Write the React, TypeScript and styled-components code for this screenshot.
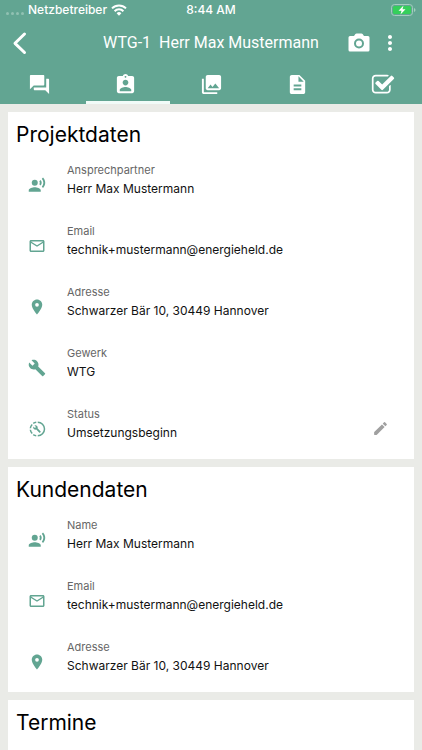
import React from "react";
import styled, { createGlobalStyle } from "styled-components";
import {
  MdForum,
  MdAssignmentInd,
  MdPhotoLibrary,
  MdDescription,
  MdRecordVoiceOver,
  MdMailOutline,
  MdPlace,
  MdBuild,
  MdMoreVert,
} from "react-icons/md";

const green = "#62a592";

const GlobalStyle = createGlobalStyle`
  * { box-sizing: border-box; }
  body {
    margin: 0;
    background: #eaebe7;
    font-family: Inter, "Liberation Sans", sans-serif;
    color: #111;
  }
  #root { display: flex; flex-direction: column; min-height: 100vh; }
  button { border: 0; padding: 0; background: none; color: inherit; font: inherit; cursor: pointer; }
  svg { display: block; }
`;

const Header = styled.header`
  background: ${green};
  color: #fff;
  overflow: hidden;
`;

const StatusBar = styled.div`
  display: grid;
  grid-template-columns: 1fr auto 1fr;
  align-items: center;
  height: 20px;
  padding: 0 6px;
  font-size: 12px;
  line-height: 20px;
  font-weight: 500;
`;

const Carrier = styled.div`
  display: flex;
  align-items: center;
  gap: 4px;
`;

const Dots = styled.span`
  display: flex;
  gap: 2px;
  padding-top: 6px;
`;

const Dot = styled.i`
  width: 3px;
  height: 3px;
  border-radius: 50%;
  background: #91c1b2;
`;

const BatterySlot = styled.div`
  display: flex;
  justify-content: flex-end;
`;

const TitleBar = styled.div`
  display: grid;
  grid-template-columns: 80px 1fr 80px;
  align-items: center;
  height: 46px;
`;

const BackButton = styled.button`
  justify-self: start;
  padding-left: 12px;
`;

const Title = styled.h1`
  margin: 0;
  font: 400 16px/24px Roboto, sans-serif;
  text-align: center;
  white-space: pre;
`;

const Actions = styled.div`
  display: flex;
  align-items: center;
  gap: 8px;
  padding-left: 6px;
`;

const Tabs = styled.nav`
  display: grid;
  grid-template-columns: repeat(5, 1fr);
  margin: 0 -4px;
`;

const Tab = styled.button<{ $active?: boolean }>`
  position: relative;
  display: flex;
  justify-content: center;
  height: 38px;
  padding-top: 7px;

  &::after {
    content: "";
    position: absolute;
    inset: auto -2px 0 4px;
    height: 3px;
    background: ${(p) => (p.$active ? "#f1fbf8" : "transparent")};
  }
`;

const Content = styled.main`
  display: flex;
  flex: 1;
  flex-direction: column;
  gap: 8px;
  padding: 8px 8px 0;
`;

const Card = styled.section`
  background: #fff;
  padding: 9px 8px 4px;

  &:last-child { flex: 1; }
`;

const Heading = styled.h2`
  margin: 0 0 1px;
  font-size: 21px;
  line-height: 28px;
  font-weight: 400;
  color: #000;
`;

const Row = styled.div`
  display: grid;
  grid-template-columns: 51px 1fr 34px;
  align-items: center;
  height: 61px;
`;

const RowIcon = styled.span`
  padding: 8px 0 0 12px;
  color: ${green};
`;

const Label = styled.div`
  font-size: 11px;
  line-height: 16px;
  color: #666;
`;

const Value = styled.div`
  font-size: 12px;
  line-height: 22px;
`;

const EditButton = styled.button`
  justify-self: start;
  padding-top: 8px;
  color: #a0a0a0;
`;

const WifiIcon = () => (
  <svg width="16" height="12" viewBox="0 0 16 12" fill="none" stroke="#fff" strokeWidth="2" aria-hidden="true">
    <path d="M1 4.4a10 10 0 0 1 14 0M3.6 7.2a6.2 6.2 0 0 1 8.8 0" />
    <path d="M8 11.8 5.6 9.3a3.4 3.4 0 0 1 4.8 0Z" fill="#fff" stroke="none" />
  </svg>
);

const BatteryIcon = () => (
  <svg width="25" height="12" viewBox="0 0 25 12" aria-label="Akku wird geladen">
    <rect x=".5" y=".5" width="21" height="11" rx="3" fill="none" stroke="#a5cdbf" />
    <rect x="2" y="2" width="18" height="8" rx="1.5" fill="#35cf5b" />
    <path d="M23 4q1.5 .5 1.5 2T23 8Z" fill="#a5cdbf" />
    <path d="M12.5 1.5 7.5 6.7h3l-1 3.8 5-5.2h-3Z" fill="#fff" />
  </svg>
);

const BackIcon = () => (
  <svg width="16" height="24" viewBox="0 0 16 24" fill="none" stroke="#fff" strokeWidth="3" strokeLinecap="round" strokeLinejoin="round" aria-hidden="true">
    <path d="M12.5 3 3 12.3l9.5 9.2" />
  </svg>
);

const CameraIcon = () => (
  <svg width="22" height="20" viewBox="0 0 22 20" aria-hidden="true">
    <path d="M2 3h4l1.4-2q.4-.6 1.2-.6h4.800q.8 0 1.200.6L16 3h4q1.500 0 1.500 1.500v12.500q0 1.500-1.500 1.500H2q-1.500 0-1.500-1.500V4.500Q.5 3 2 3Z" fill="#fff" />
    <circle cx="11" cy="10.5" r="4" fill="none" stroke={green} strokeWidth="2" />
  </svg>
);

const CheckIcon = () => (
  <svg width="24" height="24" viewBox="0 0 1792 1792" fill="#fff" aria-hidden="true">
    <path d="M1472 930v318q0 119-84.500 203.500t-203.500 84.500h-832q-119 0-203.500-84.500t-84.500-203.500v-832q0-119 84.500-203.500t203.500-84.500h832q63 0 117 25 15 7 18 23 3 17-9 29l-49 49q-10 10-23 10-3 0-9-2-23-6-45-6h-832q-66 0-113 47t-47 113v832q0 66 47 113t113 47h832q66 0 113-47t47-113v-254q0-13 9-22l64-64q10-10 23-10 6 0 12 3 20 8 20 29zm231-489l-814 814q-24 24-57 24t-57-24l-430-430q-24-24-24-57t24-57l110-110q24-24 57-24t57 24l263 263 647-647q24-24 57-24t57 24l110 110q24 24 24 57t-24 57z" />
  </svg>
);

const PencilIcon = () => (
  <svg width="17" height="17" viewBox="0 0 24 24" fill="currentColor" aria-hidden="true">
    <path d="M3 17.460v3.040c0 .28.22.5.5.5h3.040c.13 0 .26-.05.35-.15L17.810 9.940l-3.750-3.750L3.150 17.100q-.15.15-.15.36zM20.710 7.040a1 1 0 0 0 0-1.410l-2.340-2.340a1 1 0 0 0-1.410 0l-1.830 1.830 3.750 3.750 1.830-1.830z" />
  </svg>
);

const ProgressIcon = () => (
  <svg width="18" height="18" viewBox="0 0 24 24" fill="none" stroke="currentColor" strokeWidth="2" aria-hidden="true">
    <path d="M13 3a9 9 0 0 1 0 18M11 3a9 9 0 0 0-4 1.600M5.600 6A9 9 0 0 0 3.100 11M3.100 13a9 9 0 0 0 2.500 5M7 19.400A9 9 0 0 0 11 21" />
    <g transform="translate(6.500 6.500) scale(.46)" fill="currentColor" stroke="none">
      <path d="M22.700 19l-9.100-9.100c.9-2.300.4-5-1.500-6.900-2-2-5-2.400-7.400-1.300L9 6 6 9 1.600 4.700C.4 7.100.9 10.100 2.900 12.100c1.900 1.900 4.600 2.400 6.900 1.500l9.100 9.100c.4.4 1 .4 1.400 0l2.300-2.300c.5-.4.5-1.100.1-1.400z" />
    </g>
  </svg>
);

type Entry = { icon: React.ReactNode; label: string; value: string; editable?: boolean };

const person = <MdRecordVoiceOver size={18} />;
const mail = <MdMailOutline size={18} />;
const place = <MdPlace size={18} />;

const project: Entry[] = [
  { icon: person, label: "Ansprechpartner", value: "Herr Max Mustermann" },
  { icon: mail, label: "Email", value: "technik+mustermann@energieheld.de" },
  { icon: place, label: "Adresse", value: "Schwarzer Bär 10, 30449 Hannover" },
  { icon: <MdBuild size={18} />, label: "Gewerk", value: "WTG" },
  { icon: <ProgressIcon />, label: "Status", value: "Umsetzungsbeginn", editable: true },
];

const customer: Entry[] = [
  { icon: person, label: "Name", value: "Herr Max Mustermann" },
  { icon: mail, label: "Email", value: "technik+mustermann@energieheld.de" },
  { icon: place, label: "Adresse", value: "Schwarzer Bär 10, 30449 Hannover" },
];

const tabs = [
  { name: "Nachrichten", icon: <MdForum size={23} /> },
  { name: "Projekt", icon: <MdAssignmentInd size={23} /> },
  { name: "Bilder", icon: <MdPhotoLibrary size={23} /> },
  { name: "Dokumente", icon: <MdDescription size={23} /> },
  { name: "Aufgaben", icon: <CheckIcon /> },
];

const DataCard = ({ title, entries }: { title: string; entries: Entry[] }) => (
  <Card>
    <Heading>{title}</Heading>
    {entries.map((e) => (
      <Row key={e.label}>
        <RowIcon>{e.icon}</RowIcon>
        <div>
          <Label>{e.label}</Label>
          <Value>{e.value}</Value>
        </div>
        {e.editable && (
          <EditButton aria-label={`${e.label} bearbeiten`}>
            <PencilIcon />
          </EditButton>
        )}
      </Row>
    ))}
  </Card>
);

export default function App() {
  return (
    <>
      <GlobalStyle />
      <Header>
        <StatusBar>
          <Carrier>
            <Dots>
              <Dot /><Dot /><Dot /><Dot />
            </Dots>
            Netzbetreiber
            <WifiIcon />
          </Carrier>
          <span>8:44 AM</span>
          <BatterySlot><BatteryIcon /></BatterySlot>
        </StatusBar>
        <TitleBar>
          <BackButton aria-label="Zurück"><BackIcon /></BackButton>
          <Title>{"WTG-1  Herr Max Mustermann"}</Title>
          <Actions>
            <button aria-label="Kamera"><CameraIcon /></button>
            <button aria-label="Mehr"><MdMoreVert size={24} /></button>
          </Actions>
        </TitleBar>
        <Tabs>
          {tabs.map((t) => (
            <Tab key={t.name} $active={t.name === "Projekt"} aria-label={t.name}>
              {t.icon}
            </Tab>
          ))}
        </Tabs>
      </Header>
      <Content>
        <DataCard title="Projektdaten" entries={project} />
        <DataCard title="Kundendaten" entries={customer} />
        <DataCard title="Termine" entries={[]} />
      </Content>
    </>
  );
}
